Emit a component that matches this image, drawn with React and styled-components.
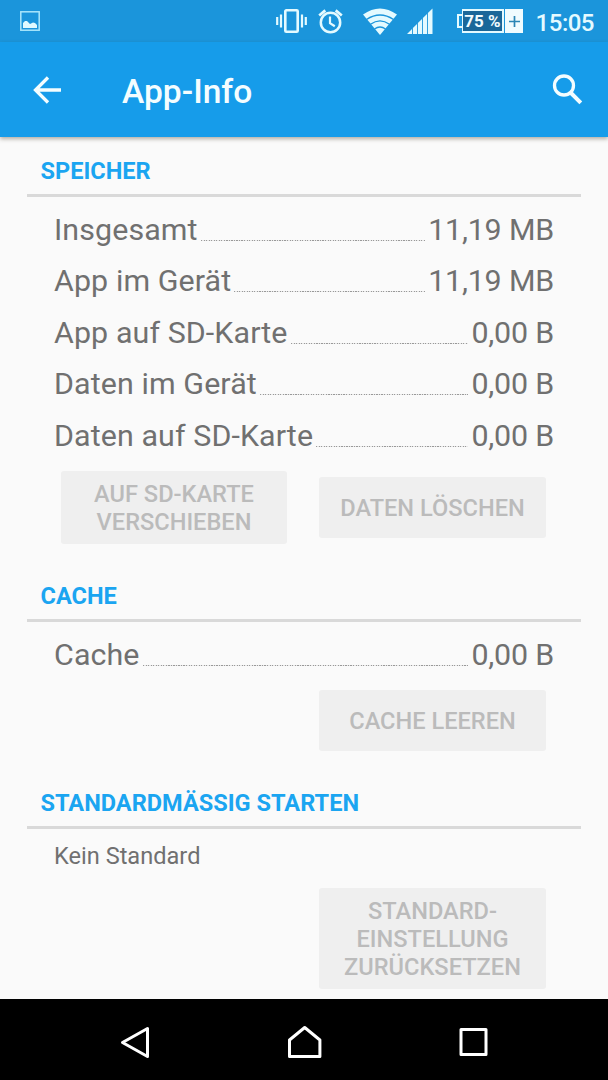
import React from 'react';
import styled, { createGlobalStyle } from 'styled-components';

const GlobalStyle = createGlobalStyle`
  * { box-sizing: border-box; }
  body { margin: 0; background: #fafafa; font-family: Roboto, sans-serif; }
`;

const Screen = styled.div`
  width: 608px;
  height: 1080px;
  display: flex;
  flex-direction: column;
  overflow: hidden;
  background: #fafafa;
  color: #707070;
`;

const StatusBar = styled.header`
  height: 42px;
  flex: none;
  display: flex;
  align-items: center;
  padding: 0 14px 0 20px;
  background: #1b95db;
  color: #e4faff;
`;

const Icon = styled.svg`
  display: block;
  flex: none;
  width: ${(p) => p.$w}px;
  height: ${(p) => p.$h}px;
  margin-left: ${(p) => p.$ml || 0}px;
`;

const Battery = styled.div`
  display: flex;
  align-items: center;
  height: 24px;
  margin-left: 24px;
`;

const BatteryTip = styled.span`
  width: 5px;
  height: 14px;
  border: 2px solid #e4faff;
  border-right: 0;
`;

const BatteryLevel = styled.span`
  width: 42px;
  height: 24px;
  border: 2px solid #e4faff;
  border-left-width: 1px;
  background: #1a6799;
  color: #f2fcff;
  font-size: 17px;
  font-weight: 700;
  line-height: 21px;
  text-align: center;
  white-space: nowrap;
`;

const BatteryCharge = styled.span`
  display: flex;
  align-items: center;
  justify-content: center;
  width: 18px;
  height: 24px;
  margin-left: 1px;
  background: #f0fcff;
`;

const Clock = styled.span`
  margin-left: auto;
  font-size: 24px;
  font-weight: 500;
  letter-spacing: -0.5px;
  line-height: 28px;
  padding-top: 3px;
`;

const Toolbar = styled.div`
  position: relative;
  z-index: 1;
  height: 95px;
  flex: none;
  display: flex;
  align-items: center;
  padding: 0 25px 0 33px;
  background: #169cea;
  color: #f4fdff;
  box-shadow: 0 2px 4px rgba(60, 50, 30, 0.38);
`;

const Title = styled.h1`
  flex: 1;
  margin: 0 0 0 61px;
  padding-top: 4px;
  font-size: 33.6px;
  font-weight: 500;
  line-height: 40px;
`;

const Content = styled.main`
  flex: 1;
  min-height: 0;
  padding: 0 27px;
`;

const Section = styled.section`
  height: ${(p) => p.$height}px;
`;

const SectionTitle = styled.h2`
  height: 60px;
  margin: 0;
  padding: 20px 0 0 13.5px;
  border-bottom: 3px solid #d9d9d9;
  color: #1ba5f1;
  font-size: 23.55px;
  font-weight: 700;
  line-height: 28px;
`;

const Rows = styled.div`
  padding: 7px 27px 0;
`;

const Row = styled.div`
  display: flex;
  align-items: baseline;
  height: 51.4px;
  font-size: 30.4px;
  line-height: 51.4px;
  white-space: nowrap;
`;

const Label = styled.span`
  letter-spacing: 0.1px;
`;

const Value = styled.span`
  letter-spacing: -0.18px;
`;

const Leader = styled.span`
  flex: 1;
  height: 1px;
  margin: 0 3px;
  transform: translateY(1px);
  background: repeating-linear-gradient(90deg, #999 0 1.2px, #e8e8e8 1.2px 2.53px);
`;

const Note = styled.p`
  margin: 0;
  padding: 13px 27px 0;
  font-size: 23.6px;
  line-height: 28px;
`;

const Actions = styled.div`
  display: grid;
  grid-template-columns: 226px 227px;
  column-gap: 32px;
  align-items: center;
  padding: ${(p) => p.$top}px 0 0 34px;
`;

const Button = styled.button`
  grid-column: ${(p) => p.$column};
  min-height: 61px;
  padding: 9px 0 8px;
  border: 0;
  border-radius: 3px;
  background: #efefef;
  color: #bbb;
  font: 500 23.6px/28px Roboto, sans-serif;
  text-align: center;
  text-transform: uppercase;
  white-space: pre-line;
`;

const NavBar = styled.nav`
  height: 81px;
  flex: none;
  display: flex;
  align-items: center;
  padding: 5px 118px 0 119px;
  justify-content: space-between;
  background: #000;
`;

function StatItem({ label, value }) {
  return (
    <Row>
      <Label>{label}</Label>
      <Leader />
      <Value>{value}</Value>
    </Row>
  );
}

function StatusIcons() {
  return (
    <>
      <Icon $w={20} $h={20} viewBox="0 0 20 20">
        <rect x=".8" y=".8" width="18.4" height="18.4" fill="none" stroke="#a9e6fb" strokeWidth="1.5" />
        <path d="M3 17v-5l2-2h2l3 3 3-1.500 2 .5 2 2V17z" fill="#dff9ff" />
      </Icon>
      <Icon $w={32} $h={24} $ml={236} viewBox="0 0 32 24" fill="none" stroke="currentColor">
        <rect x="9.300" y="1.300" width="12.400" height="21.400" rx="1" strokeWidth="2.600" />
        <path d="M1.200 8v8M5 5.500v13M26 5.500v13M29.800 8v8" strokeWidth="2.200" />
      </Icon>
      <Icon $w={25} $h={25} $ml={10} viewBox="0 0 25 25" fill="none" stroke="currentColor">
        <circle cx="12.500" cy="13.500" r="9.700" strokeWidth="2.500" />
        <path d="M1.200 6.500L7.300 1.400M23.800 6.500L17.700 1.400" strokeWidth="2.700" />
        <path d="M12 7.500v6.700l4.800 3" strokeWidth="2.200" />
      </Icon>
      <Icon $w={34} $h={28} $ml={20} viewBox="0 0 34 28">
        <path d="M0 7.500Q17-4.500 34 7.500L17 28z" fill="currentColor" />
        <path d="M3.500 12.500Q17 3.500 30.500 12.500M7.500 17.300Q17 10.500 26.500 17.300M11.500 22Q17 18 22.500 22" fill="none" stroke="#1b95db" strokeWidth="1.400" />
      </Icon>
      <Icon $w={26} $h={26} $ml={10} viewBox="0 0 26 26" fill="currentColor">
        <path d="M0 26L5 21V26zM5.900 20.100L10 16V26H5.900zM10.900 15.100L15 11V26H10.900zM15.900 10.100L20 6V26H15.900zM20.900 5.100L25.500 .5V26H20.900z" />
      </Icon>
    </>
  );
}

export default function App() {
  return (
    <Screen>
      <GlobalStyle />
      <StatusBar>
        <StatusIcons />
        <Battery>
          <BatteryTip />
          <BatteryLevel>75 %</BatteryLevel>
          <BatteryCharge>
            <Icon $w={11} $h={11} viewBox="0 0 11 11">
              <path d="M5.500 0v11M0 5.500h11" stroke="#2b86b5" strokeWidth="1.700" />
            </Icon>
          </BatteryCharge>
        </Battery>
        <Clock>15:05</Clock>
      </StatusBar>
      <Toolbar>
        <Icon $w={28} $h={28} viewBox="0 0 28 28" fill="none" stroke="currentColor" strokeWidth="3.300">
          <path d="M15 1.500L2.500 14l12.500 12.500M2.500 14H28" />
        </Icon>
        <Title>App-Info</Title>
        <Icon $w={31} $h={31} viewBox="0 0 31 31" fill="none" stroke="currentColor">
          <circle cx="12" cy="11.500" r="9.500" strokeWidth="3.300" />
          <path d="M18.500 18.500l10.300 10.300" strokeWidth="4" />
        </Icon>
      </Toolbar>
      <Content>
        <Section $height={425}>
          <SectionTitle>SPEICHER</SectionTitle>
          <Rows>
            <StatItem label="Insgesamt" value="11,19 MB" />
            <StatItem label="App im Gerät" value="11,19 MB" />
            <StatItem label="App auf SD-Karte" value="0,00 B" />
            <StatItem label="Daten im Gerät" value="0,00 B" />
            <StatItem label="Daten auf SD-Karte" value="0,00 B" />
          </Rows>
          <Actions $top={10}>
            <Button $column={1}>{'Auf SD-Karte\nverschieben'}</Button>
            <Button $column={2}>Daten löschen</Button>
          </Actions>
        </Section>
        <Section $height={207}>
          <SectionTitle>CACHE</SectionTitle>
          <Rows>
            <StatItem label="Cache" value="0,00 B" />
          </Rows>
          <Actions $top={9.6}>
            <Button $column={2}>Cache leeren</Button>
          </Actions>
        </Section>
        <Section $height={230}>
          <SectionTitle>STANDARDMÄSSIG STARTEN</SectionTitle>
          <Note>Kein Standard</Note>
          <Actions $top={18}>
            <Button $column={2}>{'Standard-\neinstellung\nzurücksetzen'}</Button>
          </Actions>
        </Section>
      </Content>
      <NavBar>
        <Icon $w={32} $h={34} viewBox="0 0 32 34" fill="none" stroke="#fff" strokeWidth="3" strokeLinejoin="round">
          <path d="M28.500 3.500v28L3.500 17.500z" />
        </Icon>
        <Icon $w={36} $h={36} viewBox="0 0 36 36" fill="none" stroke="#fff" strokeWidth="3" strokeLinejoin="round">
          <path d="M2.500 32.500V16L17.700 3.500l15.200 12.500V32.500z" />
        </Icon>
        <Icon $w={32} $h={32} viewBox="0 0 32 32" fill="none" stroke="#fff" strokeWidth="3" strokeLinejoin="round">
          <rect x="3" y="3.500" width="25" height="25" />
        </Icon>
      </NavBar>
    </Screen>
  );
}
